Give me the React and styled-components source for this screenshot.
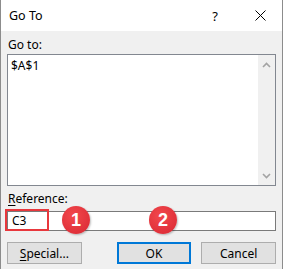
import React from "react";
import styled, { createGlobalStyle } from "styled-components";

const Global = createGlobalStyle`
  html, body { margin: 0; padding: 0; background: #fff; }
  * { box-sizing: border-box; }
`;

const Window = styled.div`
  width: 283px;
  height: 269px;
  display: flex;
  flex-direction: column;
  border-left: 1px solid #8c8c8c;
  border-right: 1px solid #8c8c8c;
  font-family: "Noto Sans", "Open Sans", sans-serif;
  font-size: 12px;
  color: #000;
`;

const TitleBar = styled.div`
  height: 31px;
  background: #fff;
  display: flex;
  align-items: center;
  padding-left: 8px;
`;

const Title = styled.div`
  flex: 1;
  font-size: 12.5px;
`;

const TitleButton = styled.div`
  width: ${(p) => p.$w}px;
  display: flex;
  align-items: center;
  justify-content: center;
  font-size: 13px;
`;

const Body = styled.div`
  flex: 1;
  background: #f0f0f0;
  padding: 6px 6px 0 6px;
  display: flex;
  flex-direction: column;
`;

const Label = styled.div`
  line-height: 16px;
  height: 16px;
  margin: ${(p) => p.$m};
  padding-left: 1px;
`;

const ListBox = styled.div`
  height: 132px;
  border: 1px solid #828790;
  background: #fff;
  display: flex;
`;

const ListContent = styled.div`
  flex: 1;
  padding: 3px 3px;
  line-height: 16px;
`;

const ScrollBar = styled.div`
  width: 17px;
  background: #f0f0f0;
  display: flex;
  flex-direction: column;
  justify-content: space-between;
  align-items: center;
  padding: 7px 0 6px;
`;

const U = styled.span`
  text-decoration: underline;
  text-underline-offset: 2px;
`;

const InputRow = styled.div`
  position: relative;
  margin-top: 4px;
`;

const Input = styled.div`
  height: 20px;
  border: 1px solid #7a7a7a;
  background: #fff;
  padding-left: 4px;
  line-height: 18px;
`;

const Highlight = styled.div`
  position: absolute;
  left: -2px;
  top: -2px;
  width: 44px;
  height: 22px;
  border: 2px solid #e8383d;
`;

const Badge = styled.div`
  position: absolute;
  left: ${(p) => p.$x}px;
  top: -5px;
  width: 28px;
  height: 28px;
  border-radius: 50%;
  background: radial-gradient(circle at 40% 35%, #f2484c 0%, #e0313a 70%, #cf2a33 100%);
  box-shadow: 1px 1px 2px rgba(0,0,0,0.25);
  color: #fff;
  font-family: "Liberation Sans", Arial, sans-serif;
  font-weight: bold;
  font-size: 18px;
  display: flex;
  align-items: center;
  justify-content: center;
`;

const ButtonRow = styled.div`
  display: flex;
  margin-top: 11px;
`;

const Button = styled.div`
  width: 75px;
  height: 22px;
  background: #e1e1e1;
  border: ${(p) => (p.$default ? "2px solid #0078d7" : "1px solid #adadad")};
  display: flex;
  align-items: center;
  justify-content: center;
  margin-left: ${(p) => p.$ml || 0}px;
`;

const Chevron = ({ up }) => (
  <svg width="9" height="6" viewBox="0 0 9 6">
    <path
      d={up ? "M1 5 L4.5 1.5 L8 5" : "M1 1 L4.5 4.5 L8 1"}
      fill="none"
      stroke="#a3a3a3"
      strokeWidth="1.6"
    />
  </svg>
);

export default function App() {
  return (
    <>
      <Global />
      <Window>
        <TitleBar>
          <Title>Go To</Title>
          <TitleButton $w={46}>?</TitleButton>
          <TitleButton $w={44}>
            <svg width="11" height="11" viewBox="0 0 11 11">
              <path d="M0.5 0.5 L10.5 10.5 M10.5 0.5 L0.5 10.5" stroke="#000" strokeWidth="1" />
            </svg>
          </TitleButton>
        </TitleBar>
        <Body>
          <Label $m="0 0 1px 0">Go to:</Label>
          <ListBox>
            <ListContent>$A$1</ListContent>
            <ScrollBar>
              <Chevron up />
              <Chevron />
            </ScrollBar>
          </ListBox>
          <Label $m="5px 0 0 0">
            <U>R</U>eference:
          </Label>
          <InputRow>
            <Input>C3</Input>
            <Highlight />
            <Badge $x={55}>1</Badge>
            <Badge $x={142}>2</Badge>
          </InputRow>
          <ButtonRow>
            <Button>
              <U>S</U>pecial...
            </Button>
            <Button $default $ml={35}>OK</Button>
            <Button $ml={10}>Cancel</Button>
          </ButtonRow>
        </Body>
      </Window>
    </>
  );
}
